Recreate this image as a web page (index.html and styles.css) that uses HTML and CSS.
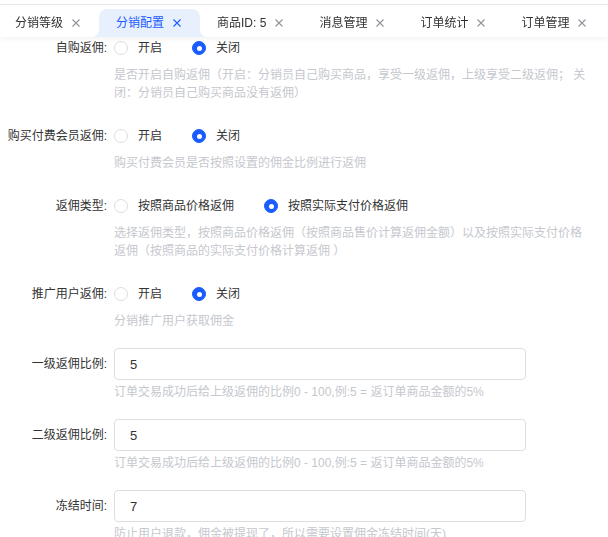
FILE: index.html
```html
<!DOCTYPE html>
<html lang="zh-CN">
<head>
    <meta charset="UTF-8">
    <meta name="viewport" content="width=device-width, initial-scale=1.0">
    <title>分销配置</title>
    <link rel="stylesheet" href="styles.css">
</head>
<body>

<div class="tabs-bar">
    <div class="tabs">
        <div class="tab"><span>分销等级</span><svg class="close" viewBox="0 0 8 8"><path d="M0.5 0.5L7.5 7.5M7.5 0.5L0.5 7.5"/></svg></div>
        <div class="tab active"><span>分销配置</span><svg class="close" viewBox="0 0 8 8"><path d="M0.5 0.5L7.5 7.5M7.5 0.5L0.5 7.5"/></svg></div>
        <div class="tab"><span>商品ID: 5</span><svg class="close" viewBox="0 0 8 8"><path d="M0.5 0.5L7.5 7.5M7.5 0.5L0.5 7.5"/></svg></div>
        <div class="tab"><span>消息管理</span><svg class="close" viewBox="0 0 8 8"><path d="M0.5 0.5L7.5 7.5M7.5 0.5L0.5 7.5"/></svg></div>
        <div class="tab"><span>订单统计</span><svg class="close" viewBox="0 0 8 8"><path d="M0.5 0.5L7.5 7.5M7.5 0.5L0.5 7.5"/></svg></div>
        <div class="tab"><span>订单管理</span><svg class="close" viewBox="0 0 8 8"><path d="M0.5 0.5L7.5 7.5M7.5 0.5L0.5 7.5"/></svg></div>
    </div>
</div>

<form class="config-form">
    <!-- 自购返佣 -->
    <div class="form-item">
        <label class="item-label">自购返佣:</label>
        <div class="item-content">
            <div class="radio-group">
                <label class="radio"><span class="radio-inner"></span>开启</label>
                <label class="radio"><span class="radio-inner checked"></span>关闭</label>
            </div>
            <div class="item-desc">是否开启自购返佣（开启：分销员自己购买商品，享受一级返佣，上级享受二级返佣； 关闭：分销员自己购买商品没有返佣）</div>
        </div>
    </div>

    <div class="form-item">
        <label class="item-label">购买付费会员返佣:</label>
        <div class="item-content">
            <div class="radio-group">
                <label class="radio"><span class="radio-inner"></span>开启</label>
                <label class="radio"><span class="radio-inner checked"></span>关闭</label>
            </div>
            <div class="item-desc">购买付费会员是否按照设置的佣金比例进行返佣</div>
        </div>
    </div>

    <div class="form-item">
        <label class="item-label">返佣类型:</label>
        <div class="item-content">
            <div class="radio-group">
                <label class="radio"><span class="radio-inner"></span>按照商品价格返佣</label>
                <label class="radio"><span class="radio-inner checked"></span>按照实际支付价格返佣</label>
            </div>
            <div class="item-desc">选择返佣类型，按照商品价格返佣（按照商品售价计算返佣金额）以及按照实际支付价格返佣（按照商品的实际支付价格计算返佣 ）</div>
        </div>
    </div>

    <div class="form-item">
        <label class="item-label">推广用户返佣:</label>
        <div class="item-content">
            <div class="radio-group">
                <label class="radio"><span class="radio-inner"></span>开启</label>
                <label class="radio"><span class="radio-inner checked"></span>关闭</label>
            </div>
            <div class="item-desc">分销推广用户获取佣金</div>
        </div>
    </div>

    <!-- 比例设置 -->
    <div class="form-item input-item">
        <label class="item-label">一级返佣比例:</label>
        <div class="item-content">
            <input class="text-input" type="text" value="5">
            <div class="item-desc">订单交易成功后给上级返佣的比例0 - 100,例:5 = 返订单商品金额的5%</div>
        </div>
    </div>

    <div class="form-item input-item">
        <label class="item-label">二级返佣比例:</label>
        <div class="item-content">
            <input class="text-input" type="text" value="5">
            <div class="item-desc">订单交易成功后给上级返佣的比例0 - 100,例:5 = 返订单商品金额的5%</div>
        </div>
    </div>

    <div class="form-item input-item">
        <label class="item-label">冻结时间:</label>
        <div class="item-content">
            <input class="text-input" type="text" value="7">
            <div class="item-desc">防止用户退款，佣金被提现了，所以需要设置佣金冻结时间(天)</div>
        </div>
    </div>
</form>

</body>
</html>
```

FILE: styles.css
```css
body {
    margin: 0;
    padding: 0;
    background: #fff;
    font-family: "Liberation Sans", "Noto Sans CJK SC", sans-serif;
    font-size: 12px;
    color: #333;
    overflow: hidden;
}
.tabs-bar {
    position: fixed;
    top: 0;
    left: 0;
    right: 0;
    height: 33px;
    padding-top: 4px;
    background: #fff;
    z-index: 10;
    box-shadow: 0 2px 5px rgba(0, 0, 0, 0.05);
}
.tabs {
    display: flex;
    height: 28px;
    margin-left: -2px;
    border-top: 1px solid #e4e8ef;
    padding-top: 4px;
}
.tab {
    position: relative;
    display: flex;
    align-items: center;
    height: 28px;
    padding: 0 19px 0 17px;
    color: #303133;
    white-space: nowrap;
    line-height: 28px;
}
.tab .close {
    width: 8px;
    height: 8px;
    margin-left: 9px;
    stroke: #8f939c;
    stroke-width: 1.1;
    fill: none;
}
.tab.active {
    background: #e8f0fe;
    color: #1a5cff;
    border-radius: 8px 8px 0 0;
}
.tab.active .close {
    stroke: #1a5cff;
}
.tab.active::before,
.tab.active::after {
    content: "";
    position: absolute;
    bottom: 0;
    width: 8px;
    height: 8px;
}
.tab.active::before {
    left: -8px;
    background: radial-gradient(circle at 0 0, transparent 8px, #e8f0fe 8.5px);
}
.tab.active::after {
    right: -8px;
    background: radial-gradient(circle at 100% 0, transparent 8px, #e8f0fe 8.5px);
}
.config-form {
    padding-top: 32px;
}
.form-item {
    display: flex;
    margin-bottom: 18px;
}
.item-label {
    width: 114px;
    flex-shrink: 0;
    padding-right: 7px;
    box-sizing: border-box;
    text-align: right;
    line-height: 32px;
    color: #333;
    white-space: nowrap;
}
.item-content {
    width: 476px;
}
.radio-group {
    display: flex;
    align-items: center;
    height: 32px;
    gap: 30px;
}
.radio {
    display: flex;
    align-items: center;
    gap: 10px;
    color: #333;
    line-height: 18px;
}
.radio-inner {
    position: relative;
    width: 12px;
    height: 12px;
    border: 1px solid #dcdee2;
    border-radius: 50%;
    background: #fff;
}
.radio-inner.checked {
    border-color: #1a5cff;
    background: #1a5cff;
}
.radio-inner.checked::after {
    content: "";
    position: absolute;
    left: 3.5px;
    top: 3.5px;
    width: 5px;
    height: 5px;
    border-radius: 50%;
    background: #fff;
}
.item-desc {
    margin-top: 2px;
    line-height: 18px;
    color: #c5c8ce;
}
.input-item .item-desc {
    margin-top: 3px;
}
.text-input {
    display: block;
    width: 412px;
    height: 32px;
    padding: 0 15px;
    box-sizing: border-box;
    border: 1px solid #dcdee2;
    border-radius: 4px;
    font-family: "Liberation Sans", "Noto Sans CJK SC", sans-serif;
    font-size: 13px;
    color: #333;
    outline: none;
}
```
